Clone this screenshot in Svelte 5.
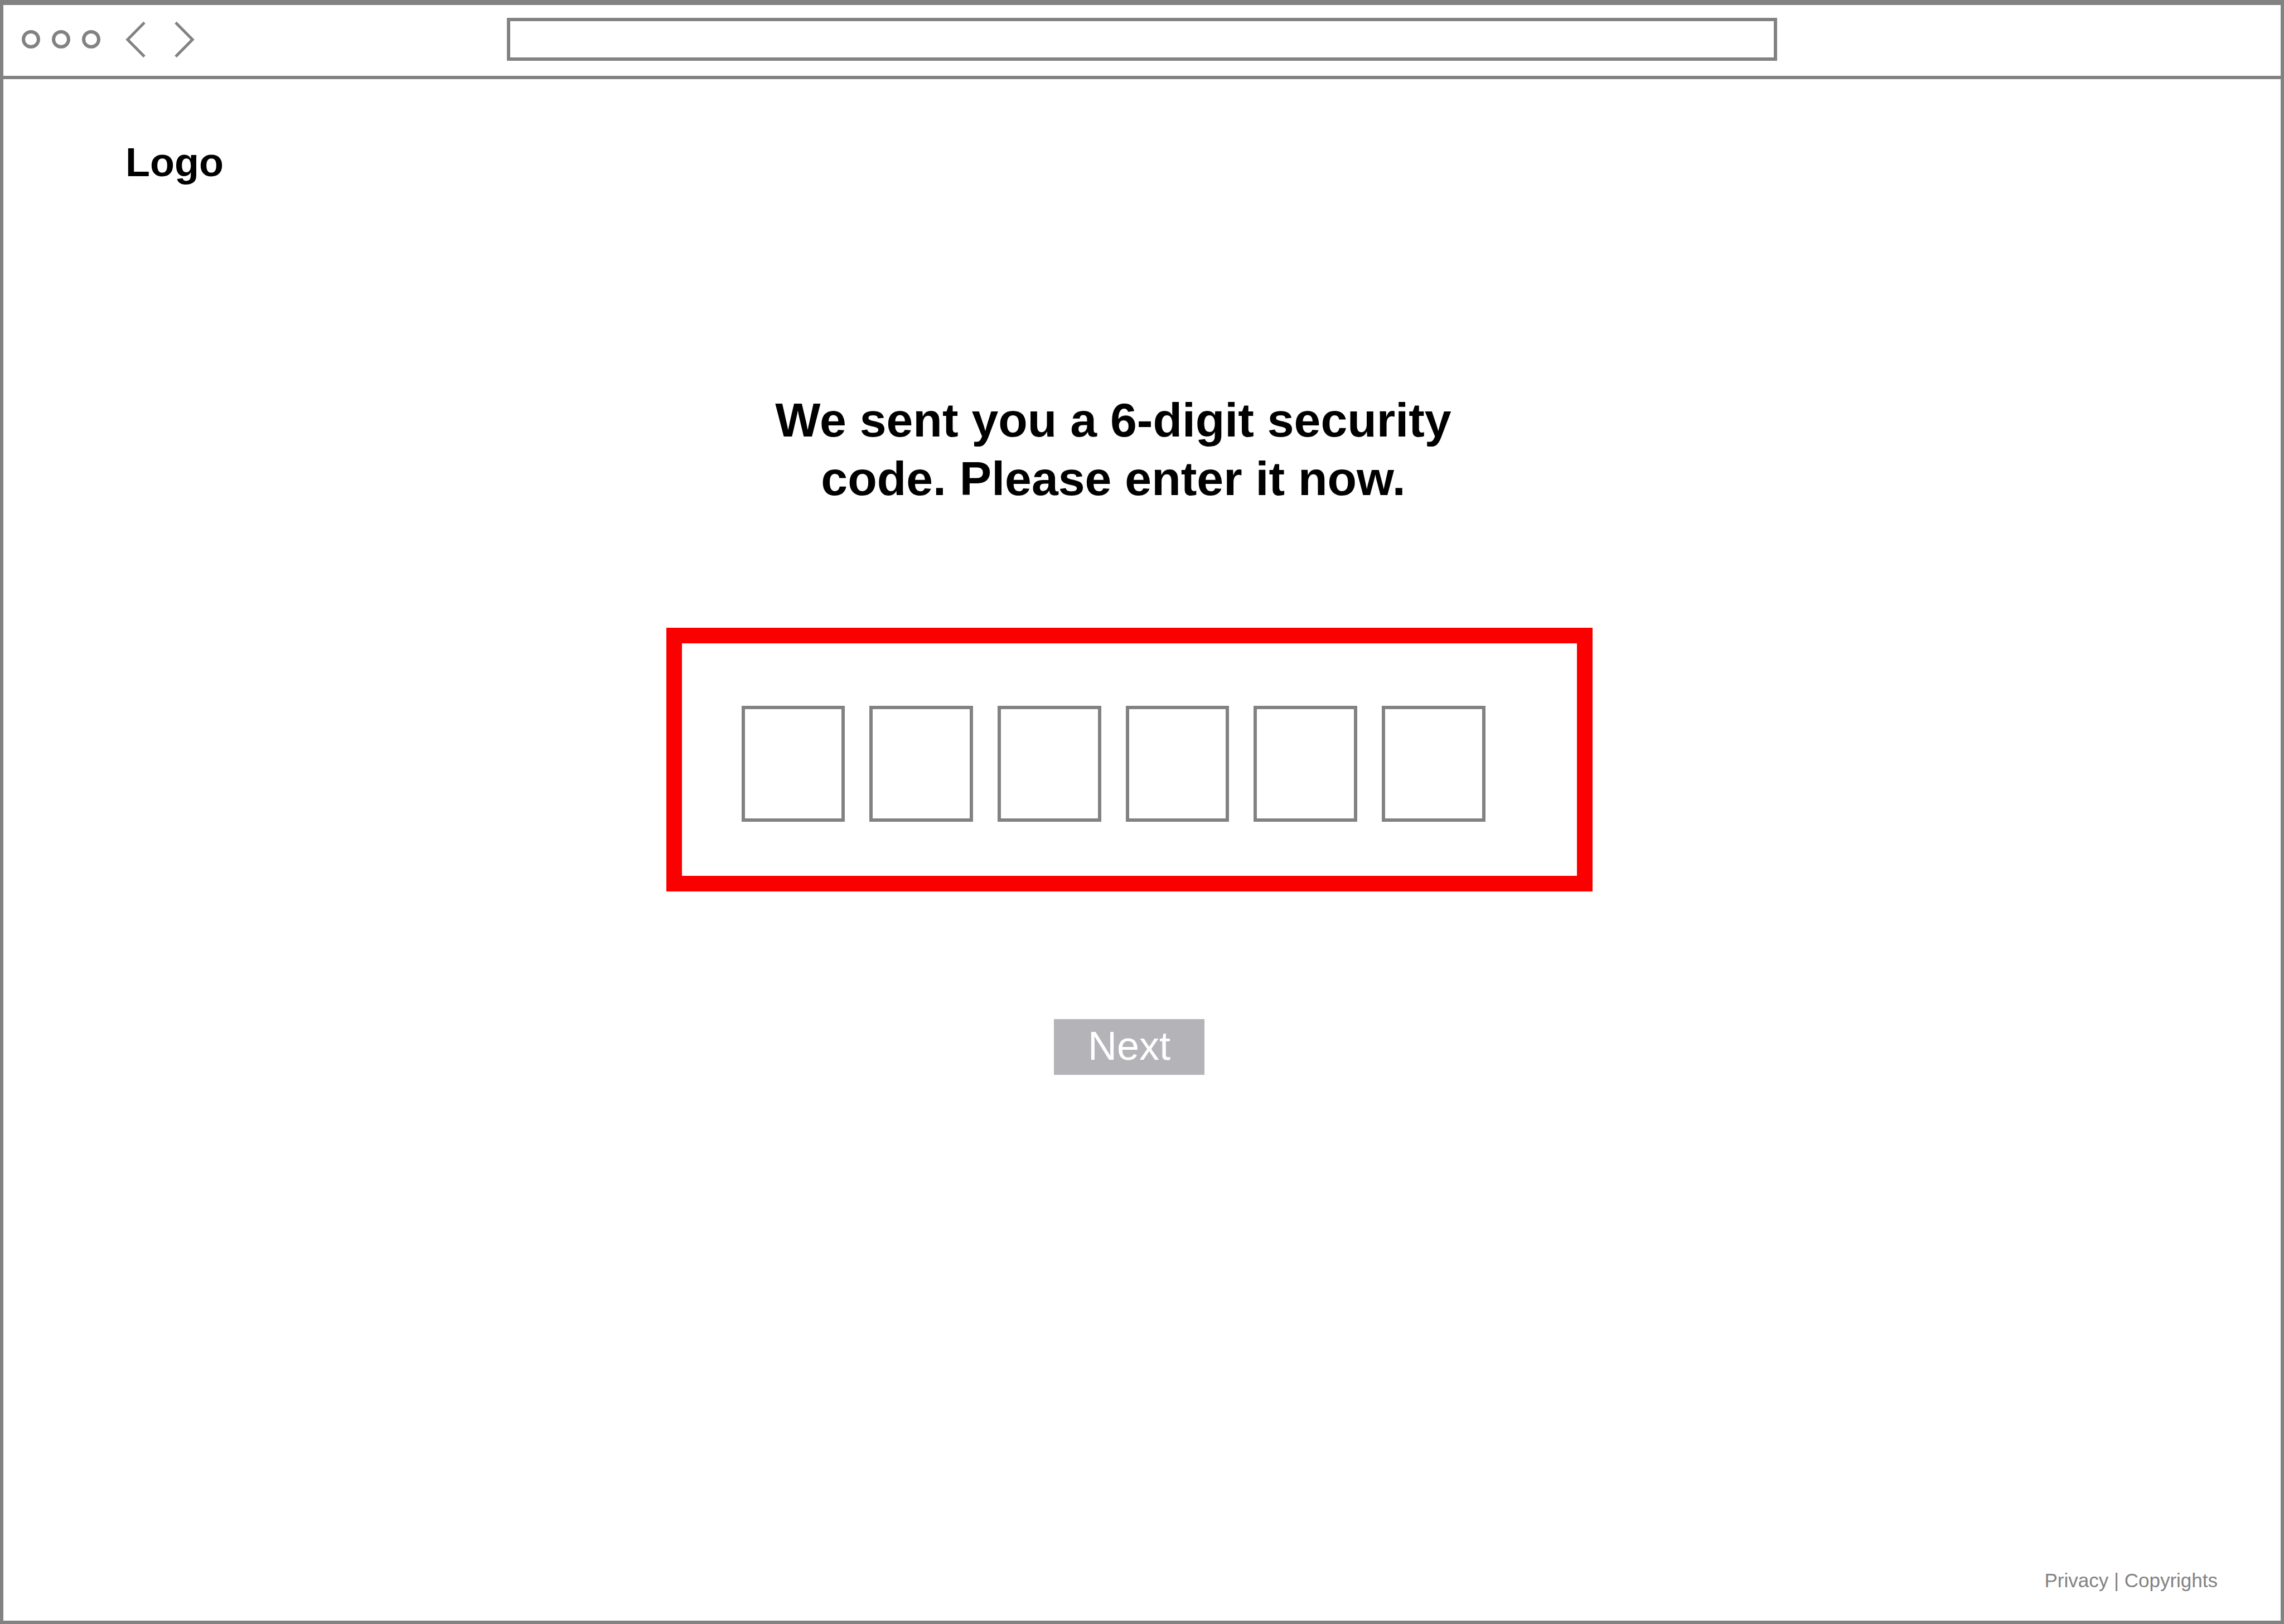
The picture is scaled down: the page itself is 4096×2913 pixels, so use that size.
<script>
  const length = 6;
  let digits = $state(Array(length).fill(''));
  let address = $state('');
</script>

<div class="window">
  <header class="toolbar">
    <div class="controls">
      <div class="dots" aria-hidden="true">
        <span class="dot"></span>
        <span class="dot"></span>
        <span class="dot"></span>
      </div>
      <nav class="history" aria-label="History">
        <button type="button" class="arrow" aria-label="Back">
          <svg viewBox="0 0 36 66"><path d="M34 2.5 L3.8 33 L34 63.5" /></svg>
        </button>
        <button type="button" class="arrow" aria-label="Forward">
          <svg viewBox="0 0 36 66"><path d="M2 2.5 L32.2 33 L2 63.5" /></svg>
        </button>
      </nav>
    </div>
    <input class="address" type="text" aria-label="Address" bind:value={address} />
  </header>

  <div class="brand">Logo</div>

  <main>
    <form onsubmit={(event) => event.preventDefault()}>
      <h1>We sent you a 6-digit security<br />code. Please enter it now.</h1>
      <div class="code" role="group" aria-label="Security code">
        {#each digits as _, i}
          <input
            class="digit"
            type="text"
            inputmode="numeric"
            maxlength="1"
            aria-label={`Digit ${i + 1}`}
            bind:value={digits[i]}
          />
        {/each}
      </div>
      <button type="submit" class="next">Next</button>
    </form>
  </main>

  <footer><a href="#privacy">Privacy</a> | <a href="#copyrights">Copyrights</a></footer>
</div>

<style>
  :global(body) {
    margin: 0;
    background: #fff;
  }

  .window {
    --line: #828282;
    box-sizing: border-box;
    min-height: 100vh;
    display: flex;
    flex-direction: column;
    border: 6px solid var(--line);
    border-top-width: 9px;
    font-family: "Liberation Sans", Arial, Helvetica, sans-serif;
    color: #000;
  }

  .toolbar {
    display: grid;
    grid-template-columns: 903px 1fr 903px;
    align-items: center;
    padding: 23px 0 27px;
    border-bottom: 6px solid var(--line);
  }

  .controls,
  .dots,
  .history {
    display: flex;
    align-items: center;
  }

  .controls {
    gap: 45px;
    padding-left: 33px;
  }

  .dots {
    gap: 21px;
  }

  .dot {
    box-sizing: border-box;
    width: 33px;
    height: 33px;
    border: 6px solid var(--line);
    border-radius: 50%;
  }

  .history {
    gap: 52px;
  }

  .arrow {
    padding: 0;
    border: 0;
    background: none;
  }

  .arrow svg {
    display: block;
    width: 36px;
    height: 66px;
    fill: none;
    stroke: var(--line);
    stroke-width: 5;
  }

  .address {
    box-sizing: border-box;
    width: 100%;
    height: 77px;
    padding: 0 24px;
    border: 6px solid var(--line);
    border-radius: 0;
    background: #fff;
    font: 35px/40px "Liberation Sans", Arial, sans-serif;
  }

  .brand {
    padding: 109px 219px 0;
    font-size: 72px;
    line-height: 80px;
    font-weight: 700;
  }

  main {
    display: flex;
    justify-content: center;
    padding: 370px 46px 0 0;
  }

  form {
    display: flex;
    flex-direction: column;
    align-items: center;
  }

  h1 {
    margin: 0;
    padding-right: 57px;
    font-size: 86px;
    line-height: 105px;
    font-weight: 700;
    text-align: center;
  }

  .code {
    display: grid;
    grid-template-columns: repeat(6, 1fr);
    gap: 44px;
    box-sizing: border-box;
    width: 1661px;
    margin: 215px 0 229px;
    padding: 112px 164px 97px 107px;
    border: 28px solid #fa0000;
  }

  .digit {
    box-sizing: border-box;
    width: 100%;
    height: 208px;
    padding: 0;
    border: 6px solid var(--line);
    border-radius: 0;
    background: #fff;
    font: 86px/105px "Liberation Sans", Arial, sans-serif;
    text-align: center;
  }

  .next {
    width: 270px;
    padding: 8px 0 12px;
    border: 0;
    background: #b4b3b8;
    color: #fff;
    font: 72px/80px "Liberation Sans", Arial, sans-serif;
  }

  footer {
    margin-top: auto;
    padding: 0 113px 52px;
    font-size: 35px;
    line-height: 40px;
    text-align: right;
    color: var(--line);
  }

  footer a {
    color: inherit;
    text-decoration: none;
  }
</style>
